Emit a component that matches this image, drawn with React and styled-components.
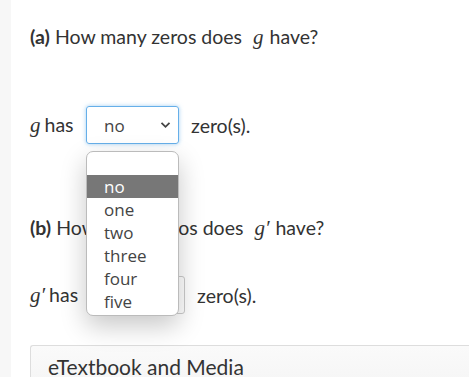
import React from "react";
import styled, { createGlobalStyle } from "styled-components";

const Global = createGlobalStyle`
  html, body { margin: 0; padding: 0; background: #f7f7f7; }
  body { font-family: Lato, "Open Sans", sans-serif; color: #333; }
`;

const Page = styled.div`
  margin-left: 11px;
  background: #fff;
  height: 377px;
  overflow: hidden;
  padding: 22px 0 0 19px;
  box-sizing: border-box;
`;

const Question = styled.div`
  font-size: 19.5px;
  line-height: 30px;
  margin-top: ${(p) => p.$top || 0}px;
  white-space: nowrap;
`;

const Label = styled.b`
  font-weight: 700;
`;

const MathVar = styled.span`
  font-family: "Liberation Serif", "DejaVu Serif", serif;
  font-style: italic;
  font-size: 21px;
  margin: 0 6px 0 6px;
`;

const Row = styled.div`
  display: flex;
  align-items: center;
  font-size: 19.5px;
  margin-top: ${(p) => p.$top}px;
  position: relative;
`;

const Prefix = styled.span`
  display: inline-block;
  width: ${(p) => p.$w}px;
  white-space: nowrap;
  & > span { margin-left: 0; margin-right: 4px; }
`;

const Select = styled.div`
  position: relative;
  box-sizing: border-box;
  width: 93px;
  height: 38px;
  border: 1px solid ${(p) => (p.$focus ? "#66afe9" : "#ccc")};
  box-shadow: ${(p) => (p.$focus ? "0 0 4px rgba(102,175,233,0.6)" : "none")};
  border-radius: 3px;
  display: flex;
  align-items: center;
  padding-left: 17px;
  font-family: "Open Sans", sans-serif;
  font-size: 17px;
  color: #444;
`;

const Chevron = styled.svg`
  position: absolute;
  right: 7px;
  top: 14px;
`;

const After = styled.span`
  margin-left: 12px;
`;

const Listbox = styled.div`
  position: absolute;
  left: 56px;
  top: 45px;
  width: 93px;
  box-sizing: border-box;
  background: #fff;
  border: 1px solid #bbb;
  border-radius: 7px;
  padding: 23px 0 2px;
  box-shadow: 0 10px 26px rgba(0, 0, 0, 0.22);
  z-index: 10;
  font-family: "Open Sans", sans-serif;
  font-size: 17px;
  color: #444;
`;

const Option = styled.div`
  height: 23px;
  line-height: 23px;
  padding-left: 17px;
  background: ${(p) => (p.$active ? "#777" : "transparent")};
  color: ${(p) => (p.$active ? "#fff" : "#444")};
`;

const Card = styled.div`
  margin-top: 31px;
  border: 1px solid #ddd;
  border-right: none;
  border-radius: 3px 0 0 0;
  background: linear-gradient(#fafafa, #f2f2f2);
  height: 60px;
  padding: 8px 0 0 17px;
  font-size: 21px;
  color: #333;
`;

const ChevronIcon = ({ color = "#444" }) => (
  <Chevron width="11" height="8" viewBox="0 0 11 8">
    <path d="M1.5 1.8 L5.5 5.8 L9.5 1.8" fill="none" stroke={color} strokeWidth="1.8" />
  </Chevron>
);

const options = ["no", "one", "two", "three", "four", "five"];

export default function App() {
  return (
    <>
      <Global />
      <Page>
        <Question>
          <Label>(a)</Label> How many zeros does <MathVar>g</MathVar>have?
        </Question>
        <Row $top={54}>
          <Prefix $w={56}>
            <MathVar>g</MathVar>has
          </Prefix>
          <Select $focus>
            no
            <ChevronIcon />
          </Select>
          <After>zero(s).</After>
          <Listbox>
            {options.map((o) => (
              <Option key={o} $active={o === "no"}>
                {o}
              </Option>
            ))}
          </Listbox>
        </Row>
        <Question $top={69}>
          <Label>(b)</Label> How many zeros does <MathVar>g′</MathVar>have?
        </Question>
        <Row $top={33}>
          <Prefix $w={62}>
            <MathVar>g′</MathVar>has
          </Prefix>
          <Select>
            no
            <ChevronIcon color="#888" />
          </Select>
          <After>zero(s).</After>
        </Row>
        <Card>eTextbook and Media</Card>
      </Page>
    </>
  );
}
